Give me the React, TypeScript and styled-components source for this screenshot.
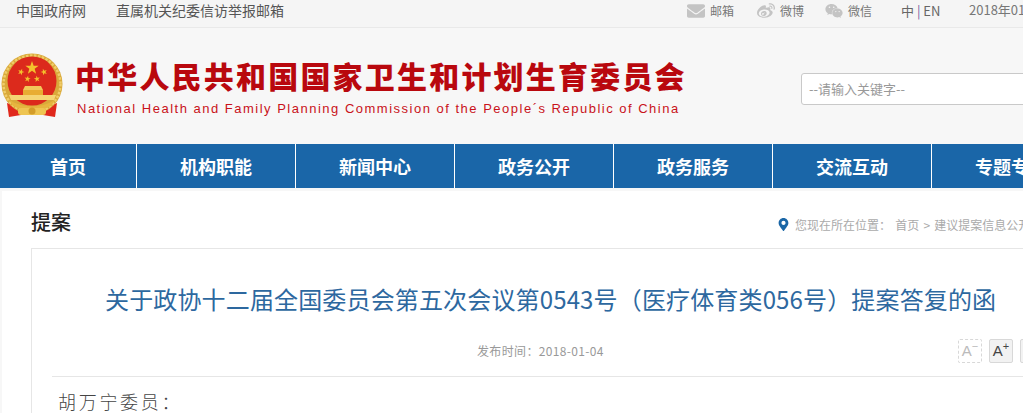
import styled, { createGlobalStyle } from 'styled-components';
import { FaWeibo, FaWeixin, FaEnvelope, FaMapMarkerAlt } from 'react-icons/fa';

const navItems = ['首页', '机构职能', '新闻中心', '政务公开', '政务服务', '交流互动', '专题专栏'];

function Star({ x, y, r, rot = 0 }: { x: number; y: number; r: number; rot?: number }) {
  const points = [];
  for (let i = 0; i < 10; i++) {
    const radius = i % 2 === 0 ? r : r * 0.4;
    const a = ((-90 + rot + i * 36) * Math.PI) / 180;
    points.push(`${(x + radius * Math.cos(a)).toFixed(2)},${(y + radius * Math.sin(a)).toFixed(2)}`);
  }
  return <polygon points={points.join(' ')} fill="#f4c22c" />;
}

function Emblem() {
  return (
    <svg width="62" height="65" viewBox="0 0 62 65">
      {/* ribbons */}
      <path d="M6 50 L8 64 L20 62 L24 56 Z" fill="#e0281c" />
      <path d="M56 50 L54 64 L42 62 L38 56 Z" fill="#e0281c" />
      {/* wheat ring */}
      <circle cx="31" cy="31" r="30.5" fill="#d9a93a" />
      <circle cx="31" cy="31" r="28.5" fill="none" stroke="#f0cd6a" strokeWidth="2.5" strokeDasharray="2.5 1.5" />
      <circle cx="31" cy="28" r="24.5" fill="#dc2a1c" />
      <Star x={31} y={15} r={7} />
      <Star x={20} y={19} r={3.4} rot={20} />
      <Star x={43} y={19} r={3.4} rot={-20} />
      <Star x={26.5} y={26} r={3.2} rot={10} />
      <Star x={36} y={26} r={3.2} rot={-10} />
      {/* gate */}
      <path d="M24 33 H40 L42 37 H22 Z" fill="#f2c85a" />
      <rect x="22" y="37" width="20" height="5" fill="#e8ad32" />
      <path d="M8 42 H55 L53 47 H10 Z" fill="#f5d574" />
      <path d="M8 47 Q31 60 54 47 L50 53 Q31 62 12 53 Z" fill="#e6b53e" />
      {/* cog and bow */}
      <rect x="17" y="55" width="28" height="7" rx="3" fill="#eec552" />
      <circle cx="31" cy="58" r="3.5" fill="#d39d2a" />
    </svg>
  );
}

function App() {
  return (
    <>
      <GlobalStyle />
      <SPage>
        <STopBar>
          <STopLinks>
            <STopLink>中国政府网</STopLink>
            <STopLink>直属机关纪委信访举报邮箱</STopLink>
          </STopLinks>
          <STopRight>
            <SShare $width={70}>
              <FaEnvelope size={18} color="#c4c4c4" />
              <span>邮箱</span>
            </SShare>
            <SShare $width={68}>
              <FaWeibo size={18} color="#c4c4c4" />
              <span>微博</span>
            </SShare>
            <SShare $width={76}>
              <FaWeixin size={18} color="#c4c4c4" />
              <span>微信</span>
            </SShare>
            <SLang>
              中 <i>|</i> EN
            </SLang>
            <SDate>2018年01月04日</SDate>
          </STopRight>
        </STopBar>

        <SHeader>
          <Emblem />
          <SBrand>
            <SBrandName>中华人民共和国国家卫生和计划生育委员会</SBrandName>
            <SBrandEn>National Health and Family Planning Commission of the People´s Republic of China</SBrandEn>
          </SBrand>
          <SSearch placeholder="--请输入关键字--" />
        </SHeader>

        <SNav>
          {navItems.map((item) => (
            <SNavItem key={item}>{item}</SNavItem>
          ))}
        </SNav>

        <SMain>
          <SCrumbRow>
            <SSectionTitle>提案</SSectionTitle>
            <SCrumbs>
              <FaMapMarkerAlt size={13} color="#1a66a6" />
              <span>您现在所在位置： 首页 &gt; 建议提案信息公开</span>
            </SCrumbs>
          </SCrumbRow>
          <SCard>
            <STitle>关于政协十二届全国委员会第五次会议第0543号（医疗体育类056号）提案答复的函</STitle>
            <SMeta>
              <SPublished>发布时间：2018-01-04</SPublished>
              <SFontTools>
                <SFontButton $disabled>
                  A<sup>−</sup>
                </SFontButton>
                <SFontButton>
                  A<sup>+</sup>
                </SFontButton>
                <SFontButton aria-label="打印" />
              </SFontTools>
            </SMeta>
            <SBody>胡万宁委员：</SBody>
          </SCard>
        </SMain>
      </SPage>
    </>
  );
}

const GlobalStyle = createGlobalStyle`
  html, body {
    margin: 0;
    padding: 0;
    overflow: hidden;
    background: #f7f7f7;
  }
  * {
    box-sizing: border-box;
  }
`;

const SPage = styled.div`
  width: 1200px;
  height: 413px;
  overflow: hidden;
  font-family: 'Noto Sans CJK SC', 'Liberation Sans', sans-serif;
`;

const STopBar = styled.div`
  display: flex;
  justify-content: space-between;
  height: 28px;
  padding: 0 0 0 16px;
  background: #f5f5f5;
  border-bottom: 1px solid #e9e9e9;
  font-size: 12px;
  line-height: 20px;
  color: #555;
`;

const STopLinks = styled.div`
  display: flex;
  gap: 30px;
`;

const STopLink = styled.a`
  color: #555;
  font-size: 14px;
`;

const STopRight = styled.div`
  display: flex;
  align-items: flex-start;
  width: 513px;
`;

const SShare = styled.div<{ $width: number }>`
  display: flex;
  align-items: center;
  gap: 5px;
  width: ${(props) => props.$width}px;
  height: 22px;
  color: #777;
  font-size: 12px;
`;

const SLang = styled.div`
  width: 68px;
  padding-top: 1px;
  color: #666;
  font-size: 13px;

  i {
    color: #7b5ea0;
    font-style: normal;
  }
`;

const SDate = styled.div`
  color: #777;
  font-size: 13px;
  white-space: nowrap;
`;

const SHeader = styled.div`
  display: flex;
  align-items: flex-start;
  height: 116px;
  padding: 25px 0 0 1px;
  background: #f7f7f7;
`;

const SBrand = styled.div`
  display: flex;
  flex-direction: column;
  margin-left: 14px;
  width: 724px;
`;

const SBrandName = styled.div`
  height: 47px;
  margin-left: -2px;
  color: #b9080e;
  font-size: 30px;
  font-weight: 900;
  line-height: 44px;
  letter-spacing: 2.2px;
  white-space: nowrap;
`;

const SBrandEn = styled.div`
  color: #c9121a;
  font-family: 'Liberation Sans', sans-serif;
  font-size: 13px;
  line-height: 18px;
  letter-spacing: 1.5px;
  white-space: nowrap;
`;

const SSearch = styled.input`
  width: 300px;
  height: 32px;
  margin-top: 20px;
  padding: 0 7px 2px;
  background: #fff;
  border: 1px solid #c9c9c9;
  border-radius: 3px;
  font-family: inherit;
  font-size: 13px;
  outline: none;

  &::placeholder {
    color: #999;
    opacity: 1;
  }
`;

const SNav = styled.nav`
  display: flex;
  height: 44px;
  background: #1a66a8;
`;

const SNavItem = styled.a`
  flex: 0 0 159px;
  border-right: 1px solid #fff;
  color: #fff;
  font-size: 18px;
  font-weight: 700;
  line-height: 45px;
  text-align: center;

  &:first-child {
    flex-basis: 137px;
  }
`;

const SMain = styled.div`
  margin: 3px 0 0 2px;
  height: 240px;
  padding: 0 0 0 29px;
  background: #fff;
`;

const SCrumbRow = styled.div`
  display: flex;
  justify-content: space-between;
  height: 57px;
`;

const SSectionTitle = styled.h2`
  margin: 17px 0 0;
  color: #222;
  font-size: 20px;
  font-weight: 500;
  line-height: 27px;
`;

const SCrumbs = styled.div`
  display: flex;
  align-items: center;
  gap: 5px;
  width: 423px;
  height: 16px;
  margin-top: 25px;
  color: #aaa;
  font-size: 12px;
  word-spacing: 1.5px;
  white-space: nowrap;
`;

const SCard = styled.div`
  width: 1140px;
  height: 200px;
  padding: 0 0 0 20px;
  border: 1px solid #e6e6e6;
  border-bottom: none;
`;

const STitle = styled.h1`
  margin: 0;
  padding: 20px 0 0 53px;
  color: #2d689f;
  font-size: 24px;
  font-weight: 400;
  line-height: 60px;
  letter-spacing: 0.15px;
  white-space: nowrap;
`;

const SMeta = styled.div`
  display: flex;
  height: 48px;
  padding-top: 10px;
  border-bottom: 1px solid #e6e6e6;
  width: 1100px;
`;

const SPublished = styled.div`
  margin-left: 425px;
  color: #999;
  font-size: 12px;
  line-height: 24px;
  letter-spacing: 0.35px;
  white-space: nowrap;
`;

const SFontTools = styled.div`
  display: flex;
  gap: 7px;
  margin-left: 354px;
`;

const SFontButton = styled.button<{ $disabled?: boolean }>`
  width: 24px;
  height: 24px;
  padding: 0;
  background: ${(props) => (props.$disabled ? '#fff' : '#f2f2f2')};
  border: 1px ${(props) => (props.$disabled ? 'dashed #d8d8d8' : 'solid #d8d8d8')};
  border-radius: 2px;
  color: ${(props) => (props.$disabled ? '#bbb' : '#444')};
  font-family: 'Liberation Sans', sans-serif;
  font-size: 15px;
  line-height: 22px;

  sup {
    font-size: 11px;
    line-height: 0;
  }
`;

const SBody = styled.p`
  margin: 9px 0 0 6px;
  color: #444;
  font-size: 18px;
  font-weight: 300;
  line-height: 30px;
  letter-spacing: 2.7px;
`;

export default App;
